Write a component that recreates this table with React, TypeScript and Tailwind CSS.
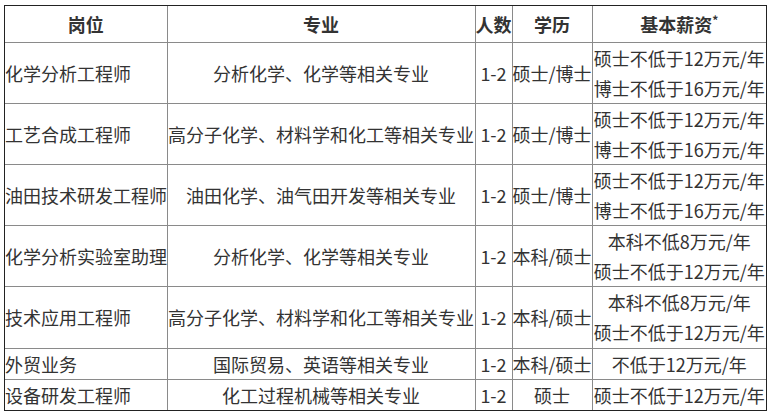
import React from "react";

type Row = {
  pos: string;
  major: string;
  num: string;
  edu: string;
  salary: string[];
  h: string;
};

const rows: Row[] = [
  { pos: "化学分析工程师", major: "分析化学、化学等相关专业", num: "1-2", edu: "硕士/博士", salary: ["硕士不低于12万元/年", "博士不低于16万元/年"], h: "h-[61px]" },
  { pos: "工艺合成工程师", major: "高分子化学、材料学和化工等相关专业", num: "1-2", edu: "硕士/博士", salary: ["硕士不低于12万元/年", "博士不低于16万元/年"], h: "h-[61px]" },
  { pos: "油田技术研发工程师", major: "油田化学、油气田开发等相关专业", num: "1-2", edu: "硕士/博士", salary: ["硕士不低于12万元/年", "博士不低于16万元/年"], h: "h-[61px]" },
  { pos: "化学分析实验室助理", major: "分析化学、化学等相关专业", num: "1-2", edu: "本科/硕士", salary: ["本科不低8万元/年", "硕士不低于12万元/年"], h: "h-[61px]" },
  { pos: "技术应用工程师", major: "高分子化学、材料学和化工等相关专业", num: "1-2", edu: "本科/硕士", salary: ["本科不低8万元/年", "硕士不低于12万元/年"], h: "h-[62px]" },
  { pos: "外贸业务", major: "国际贸易、英语等相关专业", num: "1-2", edu: "本科/硕士", salary: ["不低于12万元/年"], h: "h-[30px]" },
  { pos: "设备研发工程师", major: "化工过程机械等相关专业", num: "1-2", edu: "硕士", salary: ["硕士不低于12万元/年"], h: "h-[28px]" },
];

const cell = "border border-[#8a8a8a] p-0 whitespace-nowrap align-middle";

export default function App() {
  return (
    <div className="w-[778px] h-[411px] overflow-hidden bg-white pt-[5px] pl-[4px] font-['Noto_Sans_CJK_SC','Microsoft_YaHei',sans-serif] text-[18px] leading-[28px] text-[#333]">
      <div className="w-[763px] border border-[#222]">
        <table className="w-[761px] table-fixed border-collapse border-hidden">
          <colgroup>
            <col className="w-[162px]" />
            <col className="w-[308px]" />
            <col className="w-[37px]" />
            <col className="w-[80px]" />
            <col className="w-[174px]" />
          </colgroup>
          <thead>
            <tr className="h-[36px]">
              <th className={`${cell} text-center font-bold`}>岗位</th>
              <th className={`${cell} text-center font-bold`}>专业</th>
              <th className={`${cell} text-center font-bold`}>人数</th>
              <th className={`${cell} text-center font-bold`}>学历</th>
              <th className={`${cell} text-center font-bold`}>
                基本薪资<span className="relative -top-[7px] text-[12px] leading-none">*</span>
              </th>
            </tr>
          </thead>
          <tbody>
            {rows.map((r, i) => (
              <tr key={i} className={r.h}>
                <td className={`${cell} text-left`}>{r.pos}</td>
                <td className={`${cell} text-center`}>{r.major}</td>
                <td className={`${cell} text-center`}>{r.num}</td>
                <td className={`${cell} text-center`}>{r.edu}</td>
                <td className={`${cell} text-center`}>
                  {r.salary.map((s, j) => (
                    <div key={j} className="leading-[30px]">{s}</div>
                  ))}
                </td>
              </tr>
            ))}
          </tbody>
        </table>
      </div>
    </div>
  );
}
